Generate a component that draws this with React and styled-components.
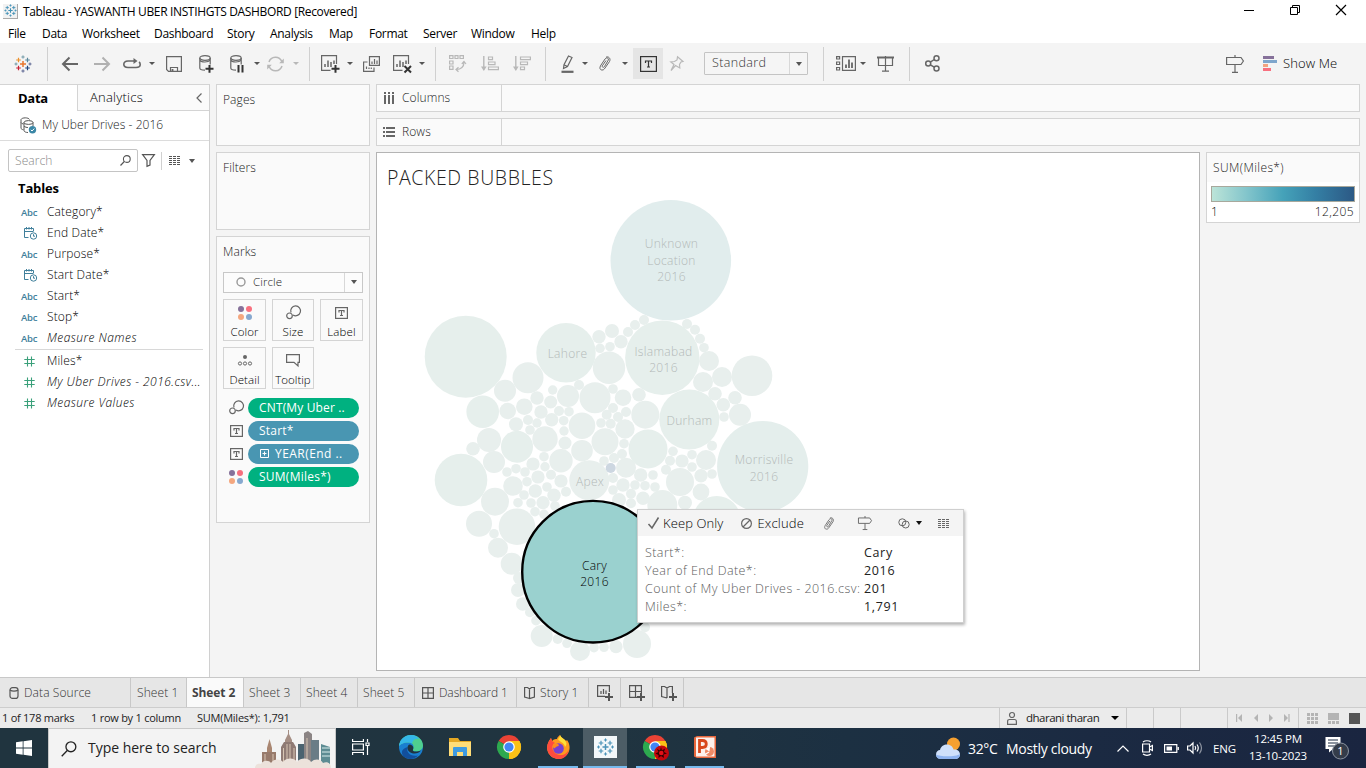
import React from "react";
import styled, { createGlobalStyle, css } from "styled-components";

const Global = createGlobalStyle`
  * { box-sizing: border-box; }
  html, body { margin: 0; padding: 0; overflow: hidden; }
  body { font-family: "Open Sans", "Noto Sans", sans-serif; font-size: 12px; color: #333; }
`;

/* ---------- shell ---------- */
const Window = styled.div`
  width: 1366px; height: 768px; display: flex; flex-direction: column; background: #f4f4f4; overflow: hidden;
`;
const Svg = styled.svg`
  display: block; flex: none; overflow: visible; fill: none;
  stroke: ${(p) => (p.$sw === 0 ? "none" : "currentColor")}; stroke-width: ${(p) => (p.$sw === undefined ? 1.2 : p.$sw)};
`;
const Label = styled.span`
  white-space: nowrap; font-size: ${(p) => p.$size || 12}px; font-weight: ${(p) => p.$weight || 350};
  letter-spacing: ${(p) => (p.$ls === undefined ? 0.1 : p.$ls)}px; color: ${(p) => p.$color || "inherit"};
  margin-left: ${(p) => p.$ml || 0}px; line-height: 1.3;
`;
const Slot = styled.div`
  flex: none; display: flex; align-items: center; justify-content: center;
  width: ${(p) => p.$w}px; margin-left: ${(p) => p.$ml || 0}px; color: ${(p) => p.$color || "inherit"};
`;
const Caret = styled.i`
  flex: none; width: 0; height: 0; border: ${(p) => p.$s || 3}px solid transparent; border-bottom: 0;
  border-top: ${(p) => (p.$s || 3) + 0.5}px solid ${(p) => p.$color || "#555"}; margin-left: ${(p) => p.$ml || 0}px;
`;

/* ---------- title + menu ---------- */
const TitleBar = styled.header`
  flex: none; height: 23px; background: #fff; display: flex; align-items: center; padding-left: 3px; color: #000;
`;
const AppBadge = styled.div`
  width: 15px; height: 15px; margin-top: -1px; background: #f2f2f2; border-right: 1px solid #aaa; border-bottom: 1px solid #aaa;
  display: flex; align-items: center; justify-content: center;
`;
const WindowButtons = styled.div`
  margin-left: auto; display: flex; align-items: center; padding-right: 20px; gap: 36px; margin-top: -3px;
`;
const MenuBar = styled.nav`
  flex: none; height: 20px; background: #fff; display: flex; align-items: center; padding-left: 8px; color: #000;
`;
const MenuItem = styled.span`
  flex: none; width: ${(p) => p.$w}px; font-size: 12px; letter-spacing: -0.3px; white-space: nowrap; line-height: 18px; margin-top: 1px;
`;

/* ---------- toolbar ---------- */
const Toolbar = styled.div`
  flex: none; height: 41px; background: #f4f4f4; display: flex; align-items: center; color: #666;
`;
const Sep = styled.i`
  flex: none; width: 1px; height: ${(p) => p.$h || 34}px; background: #d0d0d0; margin-left: ${(p) => p.$ml}px;
`;
const FitSelect = styled.div`
  flex: none; width: 104px; height: 23px; margin-left: 20px; border: 1px solid #c4c4c4; border-radius: 1px;
  display: flex; align-items: center; padding-left: 7px; background: #f5f5f5; color: #333;
`;
const SelectArrow = styled.div`
  margin-left: auto; align-self: stretch; width: ${(p) => p.$w || 18}px; border-left: 1px solid #d8d8d8;
  display: flex; align-items: center; justify-content: center;
`;
const Pressed = styled(Slot)`
  height: 31px; background: #e5e5e5; color: #333;
`;

/* ---------- work area ---------- */
const Work = styled.main`
  flex: none; height: 593px; display: flex;
`;
const DataPane = styled.aside`
  flex: none; width: 210px; background: #fff; border-right: 1px solid #d0d0d0; border-top: 1px solid #d4d4d4;
  display: flex; flex-direction: column;
`;
const PaneTabs = styled.div`
  height: 26px; flex: none; display: flex; color: #666;
`;
const PaneTab = styled.div`
  width: ${(p) => p.$w}px; display: flex; align-items: center; justify-content: space-between; padding: 0 7px 0 ${(p) => p.$pl}px;
  ${(p) => p.$idle && css`background: #fafafa; border-left: 1px solid #d4d4d4; border-bottom: 1px solid #d4d4d4;`}
`;
const SourceRow = styled.div`
  height: 30px; flex: none; border-bottom: 1px solid #dcdcdc; display: flex; align-items: center; padding-left: 20px; padding-bottom: 1px; color: #555;
`;
const SearchRow = styled.div`
  height: 40px; flex: none; display: flex; align-items: center; padding: 0 0 1px 8px; color: #555;
`;
const SearchBox = styled.div`
  width: 130px; height: 23px; border: 1px solid #c4c4c4; border-radius: 2px; display: flex; align-items: center;
  justify-content: space-between; padding: 0 6px;
`;
const TablesHead = styled.div`
  height: 20px; padding: 0 0 0 18px; display: flex; align-items: center; color: #000; margin-bottom: 3px; margin-top: -3px;
`;
const Field = styled.div`
  height: 21px; flex: none; display: flex; align-items: center; font-style: ${(p) => (p.$it ? "italic" : "normal")};
`;
const FieldIcon = styled.span`
  width: 32px; margin-left: 15px; padding-left: ${(p) => (p.$wide ? 9 : 6)}px; font-style: normal; color: ${(p) => p.$color};
  font-size: 9.5px; font-weight: 600; letter-spacing: -0.2px; padding-top: 2px;
`;
const FieldRule = styled.i`
  height: 1px; background: #d8d8d8; margin: 1px 6px 0 15px;
`;

const Shelves = styled.section`
  flex: none; width: 154px; margin-left: 6px; display: flex; flex-direction: column; gap: 6px;
`;
const Card = styled.div`
  height: ${(p) => p.$h}px; border: 1px solid #d4d4d4; background: #fafafa; padding: 7px 6px; display: flex; flex-direction: column; color: #222;
`;
const MarkSelect = styled.div`
  flex: none; height: 21px; margin-top: 12px; border: 1px solid #c8c8c8; display: flex; align-items: center; padding-left: 12px; background: #fcfcfc;
`;
const MarkGrid = styled.div`
  display: grid; grid-template-columns: 43px 42px 43px; grid-auto-rows: 42px; gap: 6px; margin-top: 6px;
`;
const MarkButton = styled.div`
  border: 1px solid #d4d4d4; display: flex; flex-direction: column; align-items: center; justify-content: space-between;
  padding: 5px 0 0; color: #666; height: 42px;
`;
const MarkIcon = styled.div`
  height: 16px; display: flex; align-items: center;
`;
const PillRow = styled.div`
  display: flex; align-items: center; height: 20px; margin-bottom: 3px; padding-left: 6px; color: #666;
`;
const PillList = styled.div`
  margin-top: 9px;
`;
const Pill = styled.div`
  width: 111px; height: 20px; border-radius: 10px; margin-left: 5px; padding-left: 11px; color: #fff;
  background: ${(p) => (p.$green ? "#00b180" : "#4996b2")}; display: flex; align-items: center;
`;

const Center = styled.section`
  flex: 1; margin-left: 6px; display: flex; flex-direction: column; gap: 6px;
`;
const Shelf = styled.div`
  flex: none; width: 984px; height: 28px; border: 1px solid #d4d4d4; background: #fafafa; display: flex; align-items: stretch; color: #222;
`;
const ShelfName = styled.div`
  width: 125px; border-right: 1px solid #d4d4d4; display: flex; align-items: center; padding-left: 6px; gap: 7px;
`;
const CanvasRow = styled.div`
  display: flex; gap: 6px; align-items: flex-start;
`;
const View = styled.div`
  position: relative; width: 824px; height: 519px; border: 1px solid #b4b4b4; background: #fff; display: flex; flex-direction: column;
`;
const ViewTitle = styled.h1`
  margin: 0; height: 43px; padding: 11px 0 0 10px; font-size: 19.5px; font-weight: 300; line-height: 28px; letter-spacing: 0.6px; color: #222;
`;
const Chart = styled.svg`
  display: block; width: 822px; height: 474px; font-size: 12px; font-weight: 350; letter-spacing: 0.3px; text-anchor: middle;
`;
const Legend = styled.div`
  width: 154px; height: 71px; border: 1px solid #d4d4d4; background: #fff; color: #111;
`;
const LegendHead = styled.div`
  height: 29px; background: #fafafa; display: flex; align-items: center; padding: 1px 0 0 6px; color: #222;
`;
const Ramp = styled.div`
  height: 16px; margin: 4px 4px 0; border: 1px solid #a8a89c; background: linear-gradient(90deg, #bce4d8, #81c4cb 25%, #45a2b9 50%, #347fa4 73%, #2c5985);
`;
const LegendEnds = styled.div`
  display: flex; justify-content: space-between; padding: 2px 5px 0 4px;
`;

/* ---------- tooltip ---------- */
const Tip = styled.div`
  position: absolute; left: 260px; top: 356px; width: 327px; height: 114px; background: #fff; border: 1px solid #cfcfcf;
  box-shadow: 1px 2px 3px rgba(0,0,0,0.3);
`;
const TipBar = styled.div`
  height: 26px; background: #f4f4f4; display: flex; align-items: center; color: #666; padding-left: 10px;
`;
const TipBody = styled.div`
  padding: 8px 0 0 7px; display: grid; grid-template-columns: 219px auto; grid-auto-rows: 18px; align-items: center;
`;

/* ---------- bottom bars ---------- */
const SheetTabs = styled.div`
  flex: none; height: 31px; background: #e6e6e6; border-top: 1px solid #c8c8c8; border-bottom: 1px solid #cdcdcd; display: flex; color: #555;
`;
const SheetTab = styled.div`
  width: ${(p) => p.$w}px; border-right: 1px solid #c8c8c8; display: flex; align-items: center; padding-left: ${(p) => p.$pl}px; gap: 5px;
  ${(p) => p.$on && css`background: #fafafa;`}
`;
const StatusBar = styled.div`
  flex: none; height: 20px; background: #ebebeb; display: flex; align-items: stretch; color: #222; padding-left: 2px;
`;
const StatusText = styled.span`
  width: ${(p) => p.$w}px; font-size: 11px; letter-spacing: -0.25px; line-height: 19px; white-space: nowrap;
`;
const StatusCell = styled.div`
  width: ${(p) => p.$w}px; border-left: 1px solid #cacaca; display: flex; align-items: center; padding-left: ${(p) => p.$pl || 0}px; color: ${(p) => p.$color || "#222"};
`;
const Taskbar = styled.footer`
  flex: none; height: 40px; display: flex; align-items: stretch; color: #fff;
  background: linear-gradient(90deg, #20343f, #203440 45%, #1c3042 62%, #1b2a42 80%, #1a2540);
`;
const SearchField = styled.div`
  width: 288px; margin-left: 16px; background: #f3f3f3; border: 1px solid #c8c8c8; border-bottom-width: 0; display: flex; align-items: center;
  color: #222; padding-left: 12px;
`;
const TaskItem = styled.div`
  flex: none; width: ${(p) => p.$w}px; margin-left: ${(p) => p.$ml}px; display: flex; align-items: center; justify-content: center;
  background: ${(p) => (p.$active ? "#4d5d66" : "transparent")};
  border-bottom: 2px solid ${(p) => (p.$open ? "#76b9ed" : "transparent")};
`;
const TaskText = styled.div`
  flex: none; align-self: center; width: ${(p) => p.$w}px; margin-left: ${(p) => p.$ml || 0}px; white-space: nowrap;
  font-size: ${(p) => p.$size}px; letter-spacing: ${(p) => p.$ls}px;
`;
const Clock = styled.div`
  width: 66px; margin-left: 8px; display: flex; flex-direction: column; align-items: center; justify-content: center; gap: 2px;
`;

/* ---------- icons ---------- */
const Plus = ({ x, y, s, c, w = 1.2 }) => (
  <path d={`M${x - s} ${y}H${x + s}M${x} ${y - s}V${y + s}`} stroke={c} strokeWidth={w} />
);
const TableauMark = ({ size = 18, mono }) => {
  const c = (v) => mono || v;
  return (
    <Svg width={size} height={size} viewBox="0 0 18 18">
      <Plus x={9} y={9} s={3} c={c("#e8762c")} w={1.5} />
      <Plus x={4.5} y={5} s={2.3} c={c("#eb912c")} />
      <Plus x={13.5} y={5} s={2.3} c={c("#59879b")} />
      <Plus x={4.5} y={13} s={2.3} c={c("#c72035")} />
      <Plus x={13.5} y={13} s={2.3} c={c("#1f447e")} />
      <Plus x={9} y={2} s={1.6} c={c("#7099a6")} w={1} />
      <Plus x={9} y={16} s={1.6} c={c("#5b6591")} w={1} />
      <Plus x={2} y={9} s={1.5} c={c("#7099a6")} w={1} />
      <Plus x={16} y={9} s={1.5} c={c("#5b6591")} w={1} />
    </Svg>
  );
};
const Arrow = ({ flip }) => (
  <Svg width="16" height="16" viewBox="0 0 16 16" $sw={2}>
    <path d={flip ? "M0 8H15M8.500 1.500L15 8L8.500 14.500" : "M16 8H1M7.500 1.500L1 8L7.500 14.500"} />
  </Svg>
);
const Redo = () => (
  <Svg width="18" height="12" viewBox="0 0 18 12">
    <path strokeWidth="1.600" d="M13 3H5C2 3 .8 4.500 .8 6.300S2 9.500 5 9.500H13C16 9.500 17.200 8 17.200 6.500C17.200 5.500 17 4.700 16 4" />
    <path d="M10.500 0L14.500 3L10.500 6Z" fill="currentColor" stroke="none" />
  </Svg>
);
const Save = () => (
  <Svg width="16" height="16" viewBox="0 0 16 16">
    <path d="M.6 .6H15.400V15.400H2.500L.6 13.500ZM4.500 15.400V11.500H11.500V15.400" /><path d="M6.500 13V15.400" strokeWidth="1.800" />
  </Svg>
);
const Db = ({ mode }) => (
  <Svg width="15" height="18" viewBox="0 0 15 18">
    <ellipse cx="6" cy="3" rx="5.200" ry="2.300" />
    <path d="M.8 3V13C.8 14.500 3 15.200 6 15.200M11.200 3V9.500M.8 5C2 7.500 9 7.800 11.200 5" />
    {mode === "plus" && <path d="M6.500 13.800H14.500M10.500 10V17.800" stroke="#333" strokeWidth="2" />}
    {mode === "pause" && <path d="M8.500 10V17.500M12.500 10V17.500" stroke="#333" strokeWidth="2" />}
  </Svg>
);
const Refresh = () => (
  <Svg width="17" height="16" viewBox="0 0 17 16">
    <path strokeWidth="1.500" d="M2 6A6.800 6.800 0 0 1 14.800 5.500M15 10A6.800 6.800 0 0 1 2.200 10.500" />
    <path d="M16.800 2.500V7.200H12.200ZM.2 13.500V8.800H4.800Z" fill="currentColor" stroke="none" />
  </Svg>
);
const SheetIcon = ({ mode }) => (
  <Svg width="19" height="18" viewBox="0 0 19 18">
    <path d="M15.500 9V.6H.6V15.400H9.500" />
    <path d="M4 12V9M7 12V5.500M10 12V7M13 9V5.500" strokeWidth="1.500" />
    {mode === "plus" && <path d="M10.500 13.800H18.500M14.500 10V17.800" stroke="#333" strokeWidth="2" />}
    {mode === "x" && <path d="M11.500 11L18 17.500M18 11L11.500 17.500" stroke="#333" strokeWidth="2" />}
  </Svg>
);
const Duplicate = () => (
  <Svg width="17" height="16" viewBox="0 0 17 16">
    <path d="M6.500 .6H16.400V9.400H6.500ZM4.500 6H.6V15.400H11V11.500M9 8V5.500M11.500 8V3M14 8V4.500M3.500 13V10.500M6 13V11.500M8.300 13V11.500" />
  </Svg>
);
const Swap = () => (
  <Svg width="17" height="17" viewBox="0 0 17 17">
    <path d="M.6 .6H4V3.500H.6ZM6 .6H9V3.500H6ZM11 .6H14.400V3.500H11ZM.6 6H4V9H.6ZM.6 11H4V14.400H.6ZM15 7.500C15 11.500 12 14.500 7.500 14.500M12.800 9L15 6.500L17 9M9.500 12.200L7 14.500L9.500 16.800" />
  </Svg>
);
const Sort = ({ desc }) => (
  <Svg width="18" height="16" viewBox="0 0 18 16">
    <path d="M2.800 0V13.500" strokeWidth="1.400" />
    <path d="M0 10.500H5.600L2.800 15Z" fill="currentColor" stroke="none" />
    <path d={desc ? "M7.500 1H17.400V3.600H7.500ZM7.500 6H14.500V8.600H7.500ZM7.500 11H11.500V13.600H7.500Z" : "M7.500 1H11.500V3.600H7.500ZM7.500 6H14V8.600H7.500ZM7.500 11H17.400V13.600H7.500Z"} />
  </Svg>
);
const Pen = () => (
  <Svg width="13" height="18" viewBox="0 0 13 18">
    <path d="M7.500 1L11 2.500L6.500 11.500L2.500 13.500L3 9.800ZM3 9.800L6.500 11.500" />
    <path d="M.5 16.800H12.500" strokeWidth="2.200" />
  </Svg>
);
const Clip = ({ size = 14 }) => (
  <Svg width={size * 0.87} height={size} viewBox="0 0 13 15" $sw={1}>
    <path d="M3 9L7 3C8.500 1 11 2 10.300 4L6.500 10.500C5.500 12 3.800 11.300 4.300 9.800L8 4.500M3 9C1 12 2 14 4 14C5.500 14 6 13.500 7 12L11.500 5.500C13 2.500 10.500 0 8 1.200" />
  </Svg>
);
const TBox = ({ w = 17, h = 16, c = 3 }) => (
  <Svg width={w} height={h} viewBox={`0 0 ${w} ${h}`}>
    <rect x=".6" y=".6" width={w - 1.2} height={h - 1.2} />
    <path d={`M${w / 2 - c} ${h / 2 - c + 2}V${h / 2 - c}H${w / 2 + c}V${h / 2 - c + 2}M${w / 2} ${h / 2 - c}V${h / 2 + c}M${w / 2 - 1.5} ${h / 2 + c}H${w / 2 + 1.5}`} />
  </Svg>
);
const Pin = () => (
  <Svg width="14" height="16" viewBox="0 0 14 16">
    <path d="M7.500 .8L13 5.500L11 6L9.500 8.500L9.800 12L5.500 9.500L1 14.500L4 8.500L.8 6L4.500 5.500L7 4Z" />
  </Svg>
);
const CardsIcon = () => (
  <Svg width="20" height="15" viewBox="0 0 20 15">
    <path d="M.6 .6H3.600V3H.6ZM.6 6H3.600V8.500H.6ZM.6 11.500H3.600V14H.6ZM6.500 .6H19.400V14.400H6.500Z" />
    <path d="M10 12V8.500M13 12V3.500M16 12V6.500" strokeWidth="1.800" />
  </Svg>
);
const Present = () => (
  <Svg width="17" height="16" viewBox="0 0 17 16">
    <path d="M0 1.500H17" strokeWidth="2" /><path d="M1.500 2V9.500H15.500V2M8.500 0V15M5 15.200H12" />
  </Svg>
);
const Share = () => (
  <Svg width="15" height="17" viewBox="0 0 15 17" $sw={1.5}>
    <circle cx="3.200" cy="8.500" r="2.500" /><circle cx="11.500" cy="3.200" r="2.500" /><circle cx="11.500" cy="13.500" r="2.500" />
    <path d="M5.300 7.200L9.300 4.500M5.300 9.800L9.300 12.200" />
  </Svg>
);
const Signpost = ({ s = 18 }) => (
  <Svg width={s} height={s} viewBox="0 0 18 18">
    <path d="M.6 2.500H15L17.400 6L15 9.500H.6ZM9 0V2.500M9 9.500V17M6 17.400H12" />
  </Svg>
);
const ShowMeBars = () => (
  <Svg width="14" height="15" viewBox="0 0 14 15" $sw={3}>
    <path d="M0 1.500H11" stroke="#86719a" /><path d="M0 5.500H14" stroke="#7fa6cc" />
    <path d="M0 9.500H5" stroke="#f2a380" /><path d="M0 13.500H8" stroke="#f8707f" />
  </Svg>
);
const ListIcon = () => (
  <Svg width="12" height="9" viewBox="0 0 12 9" $sw={1}>
    {[0.5, 2.5, 4.5, 6.5, 8.5].map((y) => <path key={y} d={`M0 ${y}H12`} strokeDasharray="3 1" />)}
  </Svg>
);
const DateIcon = () => (
  <Svg width="14" height="13" viewBox="0 0 14 13" $sw={1}>
    <path d="M4.500 10.500H.5V1.500H9.500V4M.5 4.500H9.500M2.500 0V2.500M5 0V2.500M7.500 0V2.500" />
    <circle cx="9.500" cy="9" r="3.200" /><path d="M9.500 7.200V9.200H11" />
  </Svg>
);
const Hash = () => (
  <Svg width="11" height="11" viewBox="0 0 11 11"><path d="M3.500 .5V10.500M7.500 .5V10.500M.3 3.500H10.700M.3 7.500H10.700" strokeWidth="1.100" /></Svg>
);
const Source = () => (
  <Svg width="17" height="17" viewBox="0 0 17 17" $sw={1}>
    <path d="M1 2.500V11C1 12 2 12.500 3.500 12.800M1 2.500C2 .3 8.500 .3 9.500 2.500M1 5.500C1.500 6.500 2.500 7 3.500 7" />
    <ellipse cx="8.500" cy="5.500" rx="4.500" ry="1.900" />
    <path d="M4 5.500V13.500C4 14.800 6 15.500 8 15.500M13 5.500V9M4 9C5 10.300 7 10.500 8 10.500" />
    <circle cx="12.500" cy="12.800" r="3.700" fill="#3b87a6" stroke="none" /><path d="M10.800 12.800L12 14L14.300 11.600" stroke="#fff" />
  </Svg>
);
const Lens = ({ s = 11, w = 1.1 }) => (
  <Svg width={s} height={s} viewBox="0 0 11 11" $sw={w}><circle cx="6.800" cy="4" r="3.400" /><path d="M4.300 6.500L.5 10.500" /></Svg>
);
const Funnel = () => (
  <Svg width="13" height="13" viewBox="0 0 13 13"><path d="M.6 .6H12.400L8 6.500V11L5 12.400V6.500Z" /></Svg>
);
const SizeIcon = () => (
  <Svg width="15" height="15" viewBox="0 0 15 15"><path d="M5 7.500A4.900 4.900 0 1 1 7 10" /><circle cx="3.500" cy="10.800" r="2.800" /></Svg>
);
const ColorIcon = () => (
  <Svg width="14" height="14" viewBox="0 0 14 14" $sw={0}>
    <circle cx="3" cy="3" r="3" fill="#86719a" /><circle cx="11" cy="3" r="3" fill="#f8707f" />
    <circle cx="3" cy="11" r="3" fill="#f4a77f" /><circle cx="11" cy="11" r="3" fill="#86a8cf" />
  </Svg>
);
const DetailIcon = () => (
  <Svg width="14" height="11" viewBox="0 0 14 11" $sw={1}>
    <circle cx="7" cy="2" r="2" fill="currentColor" stroke="none" />
    <circle cx="2" cy="8.500" r="1.600" /><circle cx="7" cy="8.500" r="1.600" /><circle cx="12" cy="8.500" r="1.600" />
  </Svg>
);
const TipIcon = () => (
  <Svg width="14" height="13" viewBox="0 0 14 13"><path d="M.6 .6H13.400V8.400H12V12L8 8.400H.6Z" /></Svg>
);
const Grid4 = ({ plus }) => (
  <Svg width={plus ? 16 : 12} height={plus ? 16 : 12} viewBox={plus ? "0 0 16 16" : "0 0 12 12"}>
    {plus ? <path d="M8 12.400H.6V.6H12.400V8M6.500 .6V12.400M.6 6.500H12.400" /> : <path d="M.6 .6H11.400V11.400H.6ZM6 .6V11.400M.6 6H11.400" />}
    {plus && <path d="M8 12H16M12 8V16" stroke="#555" strokeWidth="2" />}
  </Svg>
);
const Book = ({ plus }) => (
  <Svg width={plus ? 16 : 11} height="16" viewBox={plus ? "0 0 16 16" : "0 0 11 16"}>
    <path d={plus ? "M6 13L.6 11.500V1.500H3.500L6 3L8.500 1.500H11.400V8M6 3V13" : "M5.500 13.500L.6 12V2.500L3.500 2.500L5.500 4L7.500 2.500H10.400V12ZM5.500 4V13.500"} />
    {plus && <path d="M8 12H16M12 8V16" stroke="#555" strokeWidth="2" />}
  </Svg>
);
const Chrome = () => (
  <Svg width="24" height="24" viewBox="0 0 24 24" $sw={0}>
    <path d="M12 12L1.600 6A12 12 0 0 1 22.400 6Z" fill="#ea4335" />
    <path d="M12 12L22.400 6A12 12 0 0 1 12 24Z" fill="#fbc116" />
    <path d="M12 12L12 24A12 12 0 0 1 1.600 6Z" fill="#2da94f" />
    <path d="M12 6H22.400A12 12 0 0 1 12 24L17.200 15Z" fill="#fbc116" />
    <circle cx="12" cy="12" r="5.800" fill="#fff" /><circle cx="12" cy="12" r="4.600" fill="#4285f4" />
  </Svg>
);
const Edge = () => (
  <Svg width="24" height="24" viewBox="0 0 24 24" $sw={0}>
    <circle cx="12" cy="12" r="12" fill="#1a7fd0" />
    <path d="M0 11C1 4 6 0 12 0C19 0 24 5 24 10.500C24 14 21 16.500 17.500 16.500C14.500 16.500 13.500 15.500 14 14.500C15 13 15.300 8 10 7.500C5 7 1 9.500 0 11Z" fill="#4fcf8f" />
    <path d="M0 11C1 4 6 0 12 0C16 0 19 2 20 4C16 3 14 5 13 8.500C12 8 11 7.600 10 7.500C5 7 1 9.500 0 11Z" fill="#35b7e8" />
    <path d="M8.500 12C7 17 11 22 19 20.500C16 24 10 25 6 22.500C2 20 1 14 8.500 12Z" fill="#124f9c" />
    <path d="M10.500 9.500C14 10 15 12.500 14 14.500C13 16 16 17.800 22 15.500C19 20 9.500 19.500 8.500 13.500C8.500 11.500 9 10 10.500 9.500Z" fill="#20343f" />
  </Svg>
);
const Firefox = () => (
  <Svg width="23" height="24" viewBox="0 0 23 24" $sw={0}>
    <path d="M2 6L4 3L5 6C7 4 9 4 10 4C10 2 12 1 13 0C14 3 18 4 19 6L20 5C26 13 21 23 12 24C3 24-3 15 2 6Z" fill="#ff9a1f" />
    <path d="M2 6L4 3L5 6L8 8C4 10 5 15 8 18C13 22 20 20 22 14C21 21 16 24 12 24C3 24-3 15 2 6Z" fill="#ff4b3e" />
    <path d="M13 0C14 3 18 4 19 7C20 9 19 11 18 12C17 7 12 7 11 4C12 3 13 2 13 0Z" fill="#ffe03a" />
    <circle cx="11.500" cy="13.500" r="5.300" fill="#7a3fd0" /><path d="M6 9C9 8 12 9 12 10.500C11 11.500 9 11 8 13C7 14 5.500 12 6 9Z" fill="#ff8a1f" />
  </Svg>
);
const Folder = () => (
  <Svg width="22" height="18" viewBox="0 0 22 18" $sw={0}>
    <path d="M0 0H9L11 3H22V18H0Z" fill="#e5a823" /><path d="M0 4H22V18H0Z" fill="#ffdd78" />
    <path d="M4 18V10Q4 9 5 9H17Q18 9 18 10V18H14V14H8V18Z" fill="#3f9be0" />
  </Svg>
);
const PowerPoint = () => (
  <Svg width="22" height="22" viewBox="0 0 22 22" $sw={0}>
    <path d="M0 1.500L3 0H22V22H3L0 20.500Z" fill="#e8673c" /><path d="M2 1.500H20.500V20.500H2Z" fill="#fdf1ec" />
    <circle cx="15.500" cy="15.500" r="4.500" fill="#ee8a66" /><path d="M15.500 15.500L11.500 13A4.500 4.500 0 0 1 16 11Z" fill="#fff" /><path d="M15 16L11 18.500" stroke="#fff" strokeWidth="1.200" />
    <path d="M5.500 17V4.500H8.500Q12.300 4.500 12.300 8T8.500 11.500H5.500" stroke="#d9481c" strokeWidth="2.800" fill="none" />
  </Svg>
);
const Skyline = () => (
  <Svg width="76" height="38" viewBox="0 0 76 38" $sw={0}>
    <path d="M30 38V10L33 4V0H34V4L37 10V38Z" fill="#a58e84" /><path d="M26 38V17L29 12H38L41 17V38Z" fill="#8f7a74" />
    <path d="M12 38V18L14.500 9L17 18V38Z" fill="#a98671" /><path d="M7 38V22H21V38Z" fill="#987b6c" />
    <path d="M49 38V3L53 1L57 4V38Z" fill="#8b8484" /><path d="M43 38V14H49V38Z" fill="#4b6370" /><path d="M56 38V10H64V38Z" fill="#6a7c86" />
    <path d="M66 38V14L75 17V38Z" fill="#5d8c93" />
    <g strokeWidth="1"><path d="M67 18H75M67 22H75M67 26H75" stroke="#d9eceb" /><path d="M32 14V34M35 14V34M28.500 18V34M39 18V34M10 24V34M18 24V34M52 8V32" stroke="#d8c6b4" /></g>
    <path d="M0 38C0 34 4 33 6 34C8 30 14 30 16 33C19 28 26 29 28 32C32 27 40 28 42 32C46 27 54 28 56 32C60 28 66 29 68 33C72 31 76 33 76 38Z" fill="#ece2db" />
  </Svg>
);

/* ---------- data ---------- */
const MENU = [["File", 34], ["Data", 40], ["Worksheet", 72], ["Dashboard", 73], ["Story", 43], ["Analysis", 59], ["Map", 40], ["Format", 54], ["Server", 48], ["Window", 60], ["Help", 40]];
const DIMENSIONS = [["Category*", "abc"], ["End Date*", "date"], ["Purpose*", "abc"], ["Start Date*", "date"], ["Start*", "abc"], ["Stop*", "abc"], ["Measure Names", "abc", true]];
const MEASURES = [["Miles*"], ["My Uber Drives - 2016.csv...", true], ["Measure Values", true]];

const SMALL = [
  [528,377.7,15.5],[505,390.7,11],[507.7,411,8.3],[524.3,406.7,8.3],[516,424.3,7],[537,398,6.7],[552.7,390,4.7],[550.7,402,6.5],[541,412,6.7],
  [528,420,5],[537,423,4.7],[551.7,419.7,6.7],[559,411,5],[568,396,11],[569,411.7,4.8],[563.7,420.7,4.8],[579,385,5],[595,397.7,15.5],[582,425.7,13.3],
  [599,336.7,6.7],[612,331,7],[621,341.7,6.7],[600,348.3,4.8],[610,346.7,4.8],[628,332,5],[635,325,5],[644,320,5],[609,367.7,16.2],[613,389,4.8],
  [623,397.7,8.3],[639,394.7,6.8],[613,408,5],[606.7,414.7,5],[618,417,5],[626,412,5],[601,423,4.8],[610.7,423.7,5],[625,429,9.7],[645.3,414.7,14],
  [687,324,5],[695,329.7,5],[700,338.7,5],[704,347.7,4.8],[709,361,10],[703,382,10],[722,377,10],[715,393.7,6.8],[723.3,404.7,6.8],[735,397.7,6.8],
  [724,417,4.8],[740,414.7,11],[752,375.7,20.3],[489,440,12],[473,448.7,6.8],[494,462,11],[530,430,4.8],[545,439,12.7],[564,431,4.7],[565,443,6.5],
  [605,441.7,13.5],[582,450.7,10.8],[624,443.7,4.8],[622,454,5],[604,461,4.8],[614,458,5],[626,467.7,10],[589.3,480.3,20],[561,460.7,11.7],
  [544,456.7,4.8],[545,466.7,4.7],[533,464,6.6],[538,477,6.6],[551,474.7,5],[525,472,4.8],[516,468.7,4.8],[507,472,4.8],[527,481.7,4.8],[513,486,9.8],
  [561,481,6.6],[547,487,4.8],[535.3,491,6.7],[524,495,4.8],[518,502.7,4.8],[531,503,4.8],[543,502.7,6.6],[554,495.3,6.7],[566,491.7,5],
  [535,511.7,4.8],[544,514.3,4.8],[555,506,4.8],[495,501.7,14],[479,523.7,13],[494,533.7,4.8],[517,526.7,18.3],[498,547.7,10],[511.7,563.7,11],
  [519,578,6],[518,590,7],[522.7,604,6.7],[530,612.3,5],[536,620.7,4.8],[541.7,636,11],[557.7,639,5],[567,643.3,4.8],[580,651,10],[594,647.7,4.8],
  [604,647.3,4.8],[616,646.7,6.6],[637,644,14],[645,627.3,5],[673,451.3,4.8],[670,460.7,5],[666,469.7,5],[682,461,6.6],[692,454.7,4.8],[692,467,4.8],
  [712,445.7,5],[706,460,10],[712,474,4.8],[701,475.7,6.7],[680,482,14],[701,492,8.4],[685,502.7,7],[662.3,505,15],[640.7,475,6.7],[653,475,4.8],
  [655,487,4.8],[645,485.7,4.8],[635,485,4.8],[623,485,6.7],[613,478,5],[613,490,4.8],[631,493.7,5],[643,498.3,6.7],[619,500,7],[631,503.3,5],
];
const MEDIUM = [[465.7,356.7,41],[566,352.7,29.7],[662.3,357.7,37.2],[482.7,411.7,16.3],[689.3,419.5,30],[461,480,26.3],[517,446.7,16],[648,449,19.5],[716.7,520,24]];
const NAMES = [["Unknown",671.5,248.3],["Location",671.5,265.3],["2016",671.5,281],["Lahore",567.5,358],["Islamabad",663.5,355.5],["2016",663.5,372],["Durham",689.5,425],["Morrisville",764,464.3],["2016",764,481],["Apex",590,486.300]];
const TIP_ROWS = [["Start*:", "Cary"], ["Year of End Date*:", "2016"], ["Count of My Uber Drives - 2016.csv:", "201"], ["Miles*:", "1,791"]];

const Bubbles = () => (
  <Chart viewBox="377 196 822 474">
    <g fill="#e8efed">{SMALL.map(([x, y, r], i) => <circle key={i} cx={x} cy={y} r={r} />)}</g>
    <g fill="#e6efec">{MEDIUM.map(([x, y, r], i) => <circle key={i} cx={x} cy={y} r={r} />)}</g>
    <circle cx="762.700" cy="466.500" r="45.600" fill="#e4eeec" />
    <circle cx="670.800" cy="260.300" r="60.300" fill="#e1eded" />
    <circle cx="610.700" cy="468" r="5" fill="#cdd7e1" />
    <g fill="#b3b9b8">{NAMES.map(([t, x, y], i) => <text key={i} x={x} y={y}>{t}</text>)}</g>
    <circle cx="593" cy="571.700" r="70.800" fill="#9ad1cf" stroke="#000" strokeWidth="2.400" />
    <g fill="#000"><text x="594.500" y="569.500">Cary</text><text x="594.500" y="586">2016</text></g>
  </Chart>
);

const FieldRow = ({ name, kind, italic }) => (
  <Field $it={italic}>
    <FieldIcon $wide={kind !== "abc"} $color={kind === "num" ? "#3aa07a" : "#3f7f9b"}>
      {kind === "abc" ? "Abc" : kind === "date" ? <DateIcon /> : <Hash />}
    </FieldIcon>
    <Label $color="#000" $ls={italic ? 0.45 : 0.15}>{name}</Label>
  </Field>
);

export default function App() {
  return (
    <Window>
      <Global />
      <TitleBar>
        <AppBadge><TableauMark size={13} mono="#3f8fb5" /></AppBadge>
        <Label $ml={5} $ls={-0.35} $weight={400}>Tableau - YASWANTH UBER INSTIHGTS DASHBORD [Recovered]</Label>
        <WindowButtons>
          <Svg width="10" height="10" viewBox="0 0 10 10" $sw={1}><path d="M0 5.500H10" /></Svg>
          <Svg width="10" height="10" viewBox="0 0 10 10" $sw={1}><path d="M.5 2.500H7.500V9.500H.5ZM2.500 2.500V.5H9.500V7.500H7.500" /></Svg>
          <Svg width="10" height="10" viewBox="0 0 10 10"><path d="M0 0L10 10M10 0L0 10" /></Svg>
        </WindowButtons>
      </TitleBar>
      <MenuBar>{MENU.map(([t, w]) => <MenuItem key={t} $w={w}>{t}</MenuItem>)}</MenuBar>

      <Toolbar>
        <Slot $w={18} $ml={14}><TableauMark /></Slot>
        <Sep $ml={15} />
        <Slot $w={16} $ml={14}><Arrow /></Slot>
        <Slot $w={16} $ml={16} $color="#b0b0b0"><Arrow flip /></Slot>
        <Slot $w={18} $ml={13}><Redo /></Slot>
        <Caret $ml={8} />
        <Slot $w={16} $ml={11}><Save /></Slot>
        <Slot $w={15} $ml={17}><Db mode="plus" /></Slot>
        <Slot $w={15} $ml={16}><Db mode="pause" /></Slot>
        <Caret $ml={9} />
        <Slot $w={17} $ml={7} $color="#b8b8b8"><Refresh /></Slot>
        <Caret $ml={9} $color="#b8b8b8" />
        <Sep $ml={10} />
        <Slot $w={19} $ml={11}><SheetIcon mode="plus" /></Slot>
        <Caret $ml={7} />
        <Slot $w={17} $ml={10}><Duplicate /></Slot>
        <Slot $w={19} $ml={13}><SheetIcon mode="x" /></Slot>
        <Caret $ml={7} />
        <Sep $ml={10} />
        <Slot $w={17} $ml={13} $color="#b8b8b8"><Swap /></Slot>
        <Slot $w={18} $ml={15} $color="#b8b8b8"><Sort /></Slot>
        <Slot $w={18} $ml={14} $color="#b8b8b8"><Sort desc /></Slot>
        <Sep $ml={14} />
        <Slot $w={13} $ml={15}><Pen /></Slot>
        <Caret $ml={8} />
        <Slot $w={13} $ml={10}><Clip size={15} /></Slot>
        <Caret $ml={11} />
        <Pressed $w={30} $ml={5}><TBox /></Pressed>
        <Slot $w={14} $ml={7} $color="#b8b8b8"><Pin /></Slot>
        <FitSelect><Label $size={12.5} $ls={0.35}>Standard</Label><SelectArrow><Caret $s={3.5} /></SelectArrow></FitSelect>
        <Sep $ml={15} />
        <Slot $w={20} $ml={12}><CardsIcon /></Slot>
        <Caret $ml={4} />
        <Slot $w={17} $ml={11}><Present /></Slot>
        <Sep $ml={15} />
        <Slot $w={15} $ml={15}><Share /></Slot>
        <Slot $w={18} $ml={286}><Signpost /></Slot>
        <Slot $w={14} $ml={19}><ShowMeBars /></Slot>
        <Label $ml={6} $size={13} $color="#000">Show Me</Label>
      </Toolbar>

      <Work>
        <DataPane>
          <PaneTabs>
            <PaneTab $w={77} $pl={18}><Label $weight={700} $size={13} $color="#000" $ls={-0.3}>Data</Label></PaneTab>
            <PaneTab $w={132} $pl={12} $idle>
              <Label $size={13} $color="#000" $ls={0.25}>Analytics</Label>
              <Svg width="6" height="10" viewBox="0 0 6 10"><path d="M5.500 .5L1 5L5.500 9.500" /></Svg>
            </PaneTab>
          </PaneTabs>
          <SourceRow><Source /><Label $ml={5} $ls={0.05} $color="#222">My Uber Drives - 2016</Label></SourceRow>
          <SearchRow>
            <SearchBox><Label $color="#888">Search</Label><Lens /></SearchBox>
            <Slot $w={13} $ml={4}><Funnel /></Slot>
            <Sep $ml={6} $h={18} />
            <Slot $w={13} $ml={6}><ListIcon /></Slot>
            <Caret $s={3.5} $ml={8} />
          </SearchRow>
          <TablesHead><Label $weight={700} $size={13} $ls={-0.15}>Tables</Label></TablesHead>
          <div>{DIMENSIONS.map(([n, k, it]) => <FieldRow key={n} name={n} kind={k} italic={it} />)}</div>
          <FieldRule />
          <div>{MEASURES.map(([n, it]) => <FieldRow key={n} name={n} kind="num" italic={it} />)}</div>
        </DataPane>

        <Shelves>
          <Card $h={62}><Label>Pages</Label></Card>
          <Card $h={78}><Label>Filters</Label></Card>
          <Card $h={287}>
            <Label>Marks</Label>
            <MarkSelect>
              <Svg width="10" height="10" viewBox="0 0 10 10" $sw={1.4}><circle cx="5" cy="5" r="4" stroke="#999" /></Svg>
              <Label $ml={7} $size={11.5}>Circle</Label>
              <SelectArrow><Caret $s={3.5} /></SelectArrow>
            </MarkSelect>
            <MarkGrid>
              <MarkButton><MarkIcon><ColorIcon /></MarkIcon><Label $size={11.5} $color="#000">Color</Label></MarkButton>
              <MarkButton><MarkIcon><SizeIcon /></MarkIcon><Label $size={11.5} $color="#000">Size</Label></MarkButton>
              <MarkButton><MarkIcon><TBox w={13} h={12} c={2.5} /></MarkIcon><Label $size={11.5} $color="#000">Label</Label></MarkButton>
              <MarkButton><MarkIcon><DetailIcon /></MarkIcon><Label $size={11.5} $color="#000">Detail</Label></MarkButton>
              <MarkButton><MarkIcon><TipIcon /></MarkIcon><Label $size={11.5} $color="#000" $ls={0}>Tooltip</Label></MarkButton>
            </MarkGrid>
            <PillList>
              <PillRow><Slot $w={14}><SizeIcon /></Slot><Pill $green><Label $weight={400} $ls={0.15}>CNT(My Uber ..</Label></Pill></PillRow>
              <PillRow><Slot $w={14}><TBox w={13} h={12} c={2.5} /></Slot><Pill><Label $weight={400} $ls={0.2}>Start*</Label></Pill></PillRow>
              <PillRow><Slot $w={14}><TBox w={13} h={12} c={2.5} /></Slot>
                <Pill>
                  <Svg width="11" height="9" viewBox="0 0 11 9" $sw={1}><path d="M1.500 .5H9.500V8.500H1.500ZM3.500 4.500H7.500M5.500 2.500V6.500" /></Svg>
                  <Label $ml={5} $weight={400} $ls={0.45}>YEAR(End ..</Label>
                </Pill>
              </PillRow>
              <PillRow><Slot $w={14}><ColorIcon /></Slot><Pill $green><Label $weight={400} $ls={0.25}>SUM(Miles*)</Label></Pill></PillRow>
            </PillList>
          </Card>
        </Shelves>

        <Center>
          <Shelf>
            <ShelfName>
              <Svg width="12" height="12" viewBox="0 0 12 12" $sw={2}><path d="M2 0V2M6 0V2M10 0V2M2 3V12M6 3V12M10 3V12" stroke="#666" /></Svg>
              <Label>Columns</Label>
            </ShelfName>
          </Shelf>
          <Shelf>
            <ShelfName>
              <Svg width="12" height="12" viewBox="0 0 12 12" $sw={2}><path d="M0 2H2M0 6H2M0 10H2M3 2H12M3 6H12M3 10H12" stroke="#666" /></Svg>
              <Label>Rows</Label>
            </ShelfName>
          </Shelf>
          <CanvasRow>
            <View>
              <ViewTitle>PACKED BUBBLES</ViewTitle>
              <Bubbles />
              <Tip>
                <TipBar>
                  <Svg width="11" height="12" viewBox="0 0 11 12" $sw={1.5}><path d="M.5 7L4 11L10.500 .5" /></Svg>
                  <Label $ml={4} $size={13} $color="#000">Keep Only</Label>
                  <Slot $w={11} $ml={18}><Svg width="11" height="11" viewBox="0 0 11 11"><circle cx="5.500" cy="5.500" r="4.900" /><path d="M9 2L2 9" /></Svg></Slot>
                  <Label $ml={5} $size={13} $color="#000" $ls={0.2}>Exclude</Label>
                  <Slot $w={11} $ml={19}><Clip size={13} /></Slot>
                  <Slot $w={15} $ml={23}><Signpost s={14} /></Slot>
                  <Slot $w={12} $ml={26}><Svg width="12" height="11" viewBox="0 0 12 11" $sw={1}><circle cx="4.300" cy="4.300" r="3.500" /><circle cx="7.700" cy="6.500" r="3.500" /></Svg></Slot>
                  <Caret $s={3.5} $ml={6} $color="#111" />
                  <Slot $w={13} $ml={15}><ListIcon /></Slot>
                </TipBar>
                <TipBody>
                  {TIP_ROWS.map(([k, v]) => (
                    <React.Fragment key={k}><Label $color="#5c5c5c" $size={12.5} $ls={0.43}>{k}</Label><Label $color="#222" $weight={500} $size={12.5} $ls={0.65}>{v}</Label></React.Fragment>
                  ))}
                </TipBody>
              </Tip>
            </View>
            <Legend>
              <LegendHead><Label $ls={0.4}>SUM(Miles*)</Label></LegendHead>
              <Ramp />
              <LegendEnds><Label>1</Label><Label $ls={0.4}>12,205</Label></LegendEnds>
            </Legend>
          </CanvasRow>
        </Center>
      </Work>

      <SheetTabs>
        <SheetTab $w={131} $pl={9}>
          <Svg width="10" height="12" viewBox="0 0 10 12"><rect x="1" y=".6" width="8" height="10.800" rx="2.500" /><path d="M1 3C3 4.500 7 4.500 9 3" /></Svg>
          <Label $color="#333">Data Source</Label>
        </SheetTab>
        <SheetTab $w={56} $pl={6}><Label $color="#333">Sheet 1</Label></SheetTab>
        <SheetTab $w={57} $pl={5} $on><Label $color="#444" $weight={700} $ls={-0.1}>Sheet 2</Label></SheetTab>
        <SheetTab $w={57} $pl={5}><Label $color="#333">Sheet 3</Label></SheetTab>
        <SheetTab $w={57} $pl={5}><Label $color="#333">Sheet 4</Label></SheetTab>
        <SheetTab $w={57} $pl={5}><Label $color="#333">Sheet 5</Label></SheetTab>
        <SheetTab $w={102} $pl={7}><Grid4 /><Label $color="#333" $ls={-0.1}>Dashboard 1</Label></SheetTab>
        <SheetTab $w={72} $pl={7}><Book /><Label $color="#333">Story 1</Label></SheetTab>
        <SheetTab $w={32} $pl={8}>
          <Svg width="16" height="16" viewBox="0 0 16 16"><path d="M8 11.400H.6V.6H12.400V7M4 9V6M6.500 9V4M9 9V5.500" /><path d="M8 12H16M12 8V16" stroke="#555" strokeWidth="2" /></Svg>
        </SheetTab>
        <SheetTab $w={32} $pl={8}><Grid4 plus /></SheetTab>
        <SheetTab $w={31} $pl={8}><Book plus /></SheetTab>
      </SheetTabs>

      <StatusBar>
        <StatusText $w={89}>1 of 178 marks</StatusText>
        <StatusText $w={106}>1 row by 1 column</StatusText>
        <StatusText $w={802}>SUM(Miles*): 1,791</StatusText>
        <StatusCell $w={127} $pl={7}>
          <Svg width="10" height="13" viewBox="0 0 10 13"><g stroke="#666"><ellipse cx="5" cy="3" rx="2.500" ry="2.500" /><path d="M.6 12.400V9.500Q.6 7.500 2.500 7.500H7.500Q9.400 7.500 9.400 9.500V12.400Z" /></g></Svg>
          <Label $ml={9} $size={11.5} $ls={-0.5} $weight={400}>dharani tharan</Label>
          <Caret $s={4} $ml={12} $color="#000" />
        </StatusCell>
        <StatusCell $w={27} /><StatusCell $w={27} /><StatusCell $w={47} />
        <StatusCell $w={71} $pl={8} $color="#b4b4b4">
          <Svg width="54" height="8" viewBox="0 0 54 8">
            <path d="M.6 0V8M53 0V8" /><path d="M6 0V8L2 4ZM22 0V8L18 4ZM33 0V8L37 4ZM48 0V8L52 4Z" fill="currentColor" stroke="none" />
          </Svg>
        </StatusCell>
        <StatusCell $w={68} $pl={8}>
          <Svg width="54" height="11" viewBox="0 0 54 11" $sw={0}>
            {[0, 4, 8].map((x) => [0, 4, 8].map((y) => <rect key={`${x}-${y}`} x={x} y={y} width="3" height="3" fill="#b4b4b4" />))}
            <path d="M21 0H32V7H21ZM21 8H24V11H21ZM25 8H28V11H25ZM29 8H32V11H29Z" fill="#b4b4b4" />
            <path d="M42 0H53V11H42Z" fill="#555" />
          </Svg>
        </StatusCell>
      </StatusBar>

      <Taskbar>
        <Slot $w={16} $ml={16}>
          <Svg width="16" height="16" viewBox="0 0 16 16" $sw={0}><path d="M0 2.300L6.700 1.300V7.600H0ZM7.500 1.200L16 0V7.600H7.500ZM0 8.400H6.700V14.700L0 13.700ZM7.500 8.400H16V16L7.500 14.800Z" fill="#fff" /></Svg>
        </Slot>
        <SearchField>
          <Lens s={16} w={0.9} />
          <Label $ml={11} $size={14} $ls={-0.02} $weight={400}>Type here to search</Label>
          <Slot $w={76} $ml={39}><Skyline /></Slot>
        </SearchField>
        <TaskItem $w={18} $ml={15}>
          <Svg width="17" height="16" viewBox="0 0 17 16"><path d="M.6 0V2.500H11.400V0M.6 5H11.400V11H.6ZM.6 16V13.500H11.400V16M15.500 0V3M15.500 7V16M14 4H17V6.500H14Z" /></Svg>
        </TaskItem>
        <TaskItem $w={24} $ml={30}><Edge /></TaskItem>
        <TaskItem $w={22} $ml={26}><Folder /></TaskItem>
        <TaskItem $w={24} $ml={26}><Chrome /></TaskItem>
        <TaskItem $w={40} $ml={17} $open><Firefox /></TaskItem>
        <TaskItem $w={44} $ml={5} $open $active>
          <Svg width="23" height="22" viewBox="0 0 23 22" $sw={0}><rect width="23" height="22" fill="#f4f8fa" /><g transform="translate(2.500 2)"><TableauMark mono="#4b93b8" /></g></Svg>
        </TaskItem>
        <TaskItem $w={39} $ml={9} $open>
          <Svg width="26" height="25" viewBox="0 0 26 25" $sw={0}>
            <Chrome /><circle cx="18.500" cy="18" r="7.500" fill="#c4060c" />
            <path d="M18 12L19 15.500L22 13.500L21 17L24 18.500L20.500 19.500L21 23L18 21L15.500 23L15.500 20L12.500 18.500L15.500 17L14 14L17 15.500Z" fill="#300" />
            <circle cx="18.300" cy="18" r="2.300" fill="#e31118" />
          </Svg>
        </TaskItem>
        <TaskItem $w={39} $ml={10} $open><PowerPoint /></TaskItem>
        <Slot $w={25} $ml={212}>
          <Svg width="25" height="23" viewBox="0 0 25 23" $sw={0}>
            <circle cx="17.500" cy="7" r="6.500" fill="#f6a030" /><path d="M5 22C1 22 0 19 0 17.500C0 14.500 2 13 4 13C5 9 8 7.500 11 7.500C14.500 7.500 17 10 17.500 12.500C21 12 24 14 24 17.500C24 20 22 22 19 22Z" fill="#cfe0fa" />
            <path d="M5 22C1 22 0 19 0 17.500C4 20 20 20 24 17C24 20 22 22 19 22Z" fill="#8fb4f0" />
          </Svg>
        </Slot>
        <TaskText $ml={7} $w={38} $size={14} $ls={-0.35}>32°C</TaskText>
        <TaskText $w={111} $size={14} $ls={-0.3}>Mostly cloudy</TaskText>
        <Slot $w={12}><Svg width="12" height="7" viewBox="0 0 12 7"><path d="M.5 6.500L6 1L11.500 6.500" /></Svg></Slot>
        <Slot $w={11} $ml={13}><Svg width="11" height="16" viewBox="0 0 11 16"><path d="M.6 4H7.500V12H.6ZM7.500 7L10.400 5.500V10.500L7.500 9M1 2C3 .3 7 .3 9 2M1 14C3 15.700 7 15.700 9 14" /></Svg></Slot>
        <Slot $w={15} $ml={11}><Svg width="15" height="9" viewBox="0 0 15 9"><path d="M.6 .6H12.800V8.400H.6ZM14.300 3V6" /><path d="M2.500 2.500H8V6.500H2.500Z" fill="#fff" stroke="none" /></Svg></Slot>
        <Slot $w={16} $ml={8}><Svg width="16" height="14" viewBox="0 0 16 14"><path d="M.6 5H3L6 2V12L3 9H.6ZM8 5Q9.500 7 8 9M10 3.500Q12.500 7 10 10.500" /><path d="M12.500 1.500Q16.500 7 12.500 12.500" opacity=".5" /></Svg></Slot>
        <TaskText $ml={10} $w={24} $size={11.5} $ls={-0.2}>ENG</TaskText>
        <Clock>
          <Label $size={11.5} $ls={-0.2} $weight={400}>12:45 PM</Label>
          <Label $size={11.5} $ls={-0.2} $weight={400}>13-10-2023</Label>
        </Clock>
        <Slot $w={26} $ml={13}>
          <Svg width="25" height="24" viewBox="0 0 25 24">
            <path d="M.5 1H15.500V13H8L4 16.500V13H.5Z" fill="#fff" stroke="none" /><path d="M3 4H13M3 7H13M3 10H9" stroke="#1b2a42" />
            <circle cx="15.500" cy="15" r="8" fill="#343c4a" stroke="#8b93a0" strokeWidth="1" />
            <text x="15.500" y="19" fill="#fff" stroke="none" fontSize="11" textAnchor="middle">1</text>
          </Svg>
        </Slot>
      </Taskbar>
    </Window>
  );
}
